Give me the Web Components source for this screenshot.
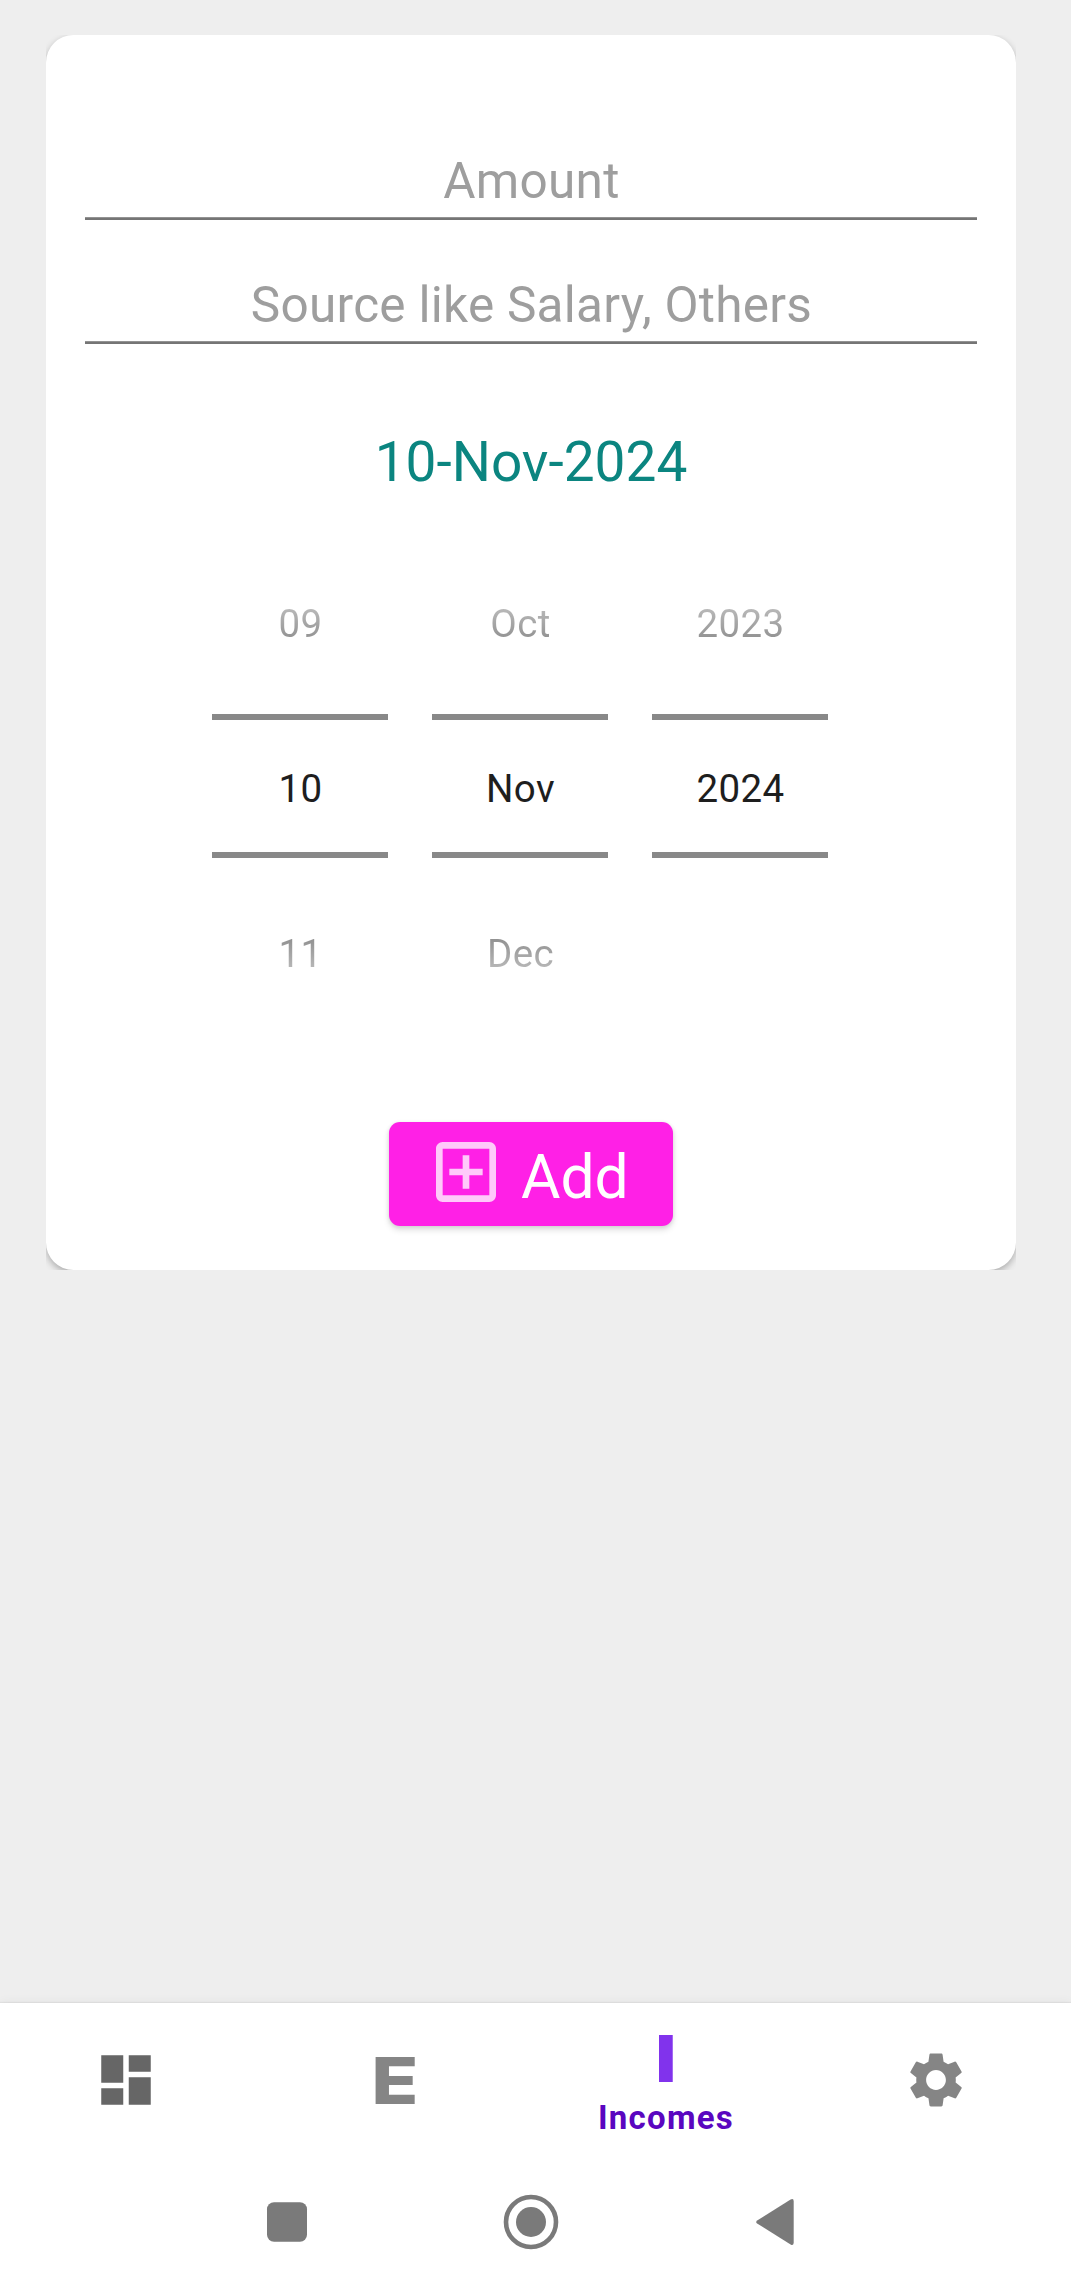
<!DOCTYPE html>
<html lang="en">
<head>
<meta charset="utf-8">
<title>Incomes</title>
<style>
html, body { margin: 0; height: 100%; }
body { background: #eeeeee; font-family: Roboto, "Liberation Sans", sans-serif; overflow: hidden; }
</style>
</head>
<body>
<income-app></income-app>
<script>
const define = (name, html) => customElements.define(name, class extends HTMLElement {
  constructor() {
    super();
    const t = document.createElement('template');
    t.innerHTML = html;
    this.attachShadow({ mode: 'open' }).append(t.content.cloneNode(true));
  }
});

define('hint-field', `
<style>
:host { display: flex; flex-direction: column; justify-content: flex-end; height: 124px; box-sizing: border-box;
  color: #9e9e9e; font-size: 49.5px; line-height: 58px; letter-spacing: .27px; text-align: center; }
.text { padding-left: 1px; }
.line { height: 2px; margin-top: 7px; background: #757575; border-top: 1px solid #939393; }
</style>
<div class="text"><slot></slot></div><div class="line"></div>`);

define('wheel-column', `
<style>
:host { display: flex; flex-direction: column; align-items: center; width: 176px; font-size: 38.5px;
  line-height: 46px; letter-spacing: .4px; color: #1e1e1e; }
.side { height: 46px; padding-left: 1px; color: transparent; -webkit-background-clip: text; background-clip: text; }
.prev { background-image: linear-gradient(#bcbcbc 5px, #8e8e8e 41px); }
.next { background-image: linear-gradient(#8e8e8e 5px, #bcbcbc 41px); }
.now { box-sizing: border-box; width: 100%; height: 144px; margin: 67px 0 73px; padding: 46px 0 0 1px; text-align: center;
  border: solid #888888; border-width: 6px 0; }
</style>
<div class="side prev"><slot name="prev"></slot></div>
<div class="now"><slot></slot></div>
<div class="side next"><slot name="next"></slot></div>`);

define('date-wheels', `
<style>:host { display: flex; gap: 44px; padding-left: 166px; }</style>
<slot></slot>`);

define('add-button', `
<style>
:host { display: flex; align-items: center; align-self: center; box-sizing: border-box; width: 284px; height: 104px;
  padding-left: 37px; border-radius: 11px; background: #ff20e6; color: #fff; font-size: 60.5px; line-height: 72px;
  box-shadow: 0 4px 6px rgba(0,0,0,.12), 0 1px 4px rgba(0,0,0,.1); }
svg { width: 80px; height: 80px; margin: -4px 15px 0 0; fill: #ffc9fa; flex: none; }
span { padding-top: 8px; }
</style>
<svg viewBox="0 0 24 24"><path d="M19 3H5c-1.11 0-2 .9-2 2v14c0 1.1.89 2 2 2h14c1.1 0 2-.9 2-2V5c0-1.1-.9-2-2-2zm0 16H5V5h14v14zm-8-2h2v-4h4v-2h-4V7h-2v4H7v2h4z"/></svg>
<span><slot></slot></span>`);

define('entry-card', `
<style>
:host { display: block; width: 970px; height: 1235px; overflow: hidden; }
.card { box-sizing: border-box; display: flex; flex-direction: column; height: 100%; padding-top: 61px;
  border-radius: 27.5px; background: #fff;
  box-shadow: 0 3px 7px rgba(0,0,0,.28); }
.fields { padding: 0 39px; }
h1 { margin: 86px 0 0; font-size: 55px; line-height: 64px; font-weight: 400; text-align: center; color: #0b8580; }
date-wheels { margin-top: 107px; }
add-button { margin-top: 145px; }
</style>
<div class="card">
  <div class="fields">
    <hint-field>Amount</hint-field>
    <hint-field>Source like Salary, Others</hint-field>
  </div>
  <h1>10-Nov-2024</h1>
  <date-wheels>
    <wheel-column><span slot="prev">09</span>10<span slot="next">11</span></wheel-column>
    <wheel-column><span slot="prev">Oct</span>Nov<span slot="next">Dec</span></wheel-column>
    <wheel-column><span slot="prev">2023</span>2024</wheel-column>
  </date-wheels>
  <add-button>Add</add-button>
</div>`);

define('tab-item', `
<style>
:host { display: flex; flex-direction: column; align-items: center; width: 270px; padding-top: 44px; box-sizing: border-box; }
:host([active]) { padding-top: 22px; }
.icon { display: flex; align-items: center; justify-content: center; width: 66px; height: 66px;
  font: 900 65px/66px Inter, sans-serif; color: #858585; }
:host([active]) .icon { color: #8133ec; }
.label { margin-top: 7px; font-size: 33px; line-height: 40px; font-weight: 700; letter-spacing: 1.25px; color: #5a06c0; }
::slotted(svg) { width: 66px; height: 66px; }
::slotted(span) { padding-top: 2px; }
</style>
<div class="icon"><slot name="icon"></slot></div>
<div class="label"><slot></slot></div>`);

define('tab-bar', `
<style>
:host { display: flex; width: 1080px; height: 154px; margin-left: -9px; flex: none; }
svg { fill: #858585; }
.dash { fill: #666; }
.e { font-weight: 850; transform: translateX(-1px) scaleX(1.19); }
.i { transform: translateX(-.5px) scaleX(1.07); }
</style>
<tab-item><svg slot="icon" class="dash" viewBox="0 0 24 24"><path d="M3 13h8V3H3v10zm0 8h8v-6H3v6zm10 0h8V11h-8v10zm0-18v6h8V3h-8z"/></svg></tab-item>
<tab-item><span slot="icon" class="e">E</span></tab-item>
<tab-item active><span slot="icon" class="i">I</span>Incomes</tab-item>
<tab-item><svg slot="icon" viewBox="0 0 24 24"><path d="M19.14 12.94c.04-.3.06-.61.06-.94 0-.32-.02-.64-.07-.94l2.03-1.58c.18-.14.23-.41.12-.61l-1.92-3.32c-.12-.22-.37-.29-.59-.22l-2.39.96c-.5-.38-1.03-.7-1.62-.94l-.36-2.54c-.04-.24-.24-.41-.48-.41h-3.84c-.24 0-.43.17-.47.41l-.36 2.54c-.59.24-1.13.57-1.62.94l-2.39-.96c-.22-.08-.47 0-.59.22L2.74 8.87c-.12.21-.08.47.12.61l2.03 1.58c-.05.3-.07.63-.07.94s.02.64.07.94l-2.03 1.58c-.18.14-.23.41-.12.61l1.92 3.32c.12.22.37.29.59.22l2.39-.96c.5.38 1.03.7 1.62.94l.36 2.54c.05.24.24.41.48.41h3.84c.24 0 .44-.17.47-.41l.36-2.54c.59-.24 1.13-.56 1.62-.94l2.39.96c.22.08.47 0 .59-.22l1.92-3.32c.12-.22.07-.47-.12-.61l-2.01-1.58zM12 15.6c-1.98 0-3.6-1.62-3.6-3.6s1.62-3.6 3.6-3.6 3.6 1.62 3.6 3.6-1.62 3.6-3.6 3.6z"/></svg></tab-item>`);

define('system-keys', `
<style>
:host { display: flex; align-items: center; justify-content: center; gap: 184px; height: 130px; width: 1061px; flex: none; }
svg { width: 60px; height: 60px; fill: #7a7a7a; }
</style>
<svg viewBox="0 0 60 60"><rect x="10" y="10.2" width="40" height="39.6" rx="7"/></svg>
<svg viewBox="0 0 60 60"><circle cx="30" cy="30" r="25" fill="none" stroke="#7a7a7a" stroke-width="4.6"/><circle cx="30" cy="30" r="15"/></svg>
<svg viewBox="0 0 60 60"><path d="M12.5 28.2 45.6 7.6Q48.7 6 48.7 9.4V50.6Q48.7 54 45.6 52.4L12.5 31.8Q9.8 30 12.5 28.2Z"/></svg>`);

define('income-app', `
<style>
:host { display: flex; flex-direction: column; width: 1071px; height: 2287px; overflow: hidden; }
main { flex: 1; padding: 35px 0 0 46px; }
footer { background: #fff; box-shadow: 0 -1px 1px rgba(0,0,0,.05), 0 -2px 9px rgba(0,0,0,.04); }
</style>
<main><entry-card></entry-card></main>
<footer><tab-bar></tab-bar><system-keys></system-keys></footer>`);
</script>
</body>
</html>
